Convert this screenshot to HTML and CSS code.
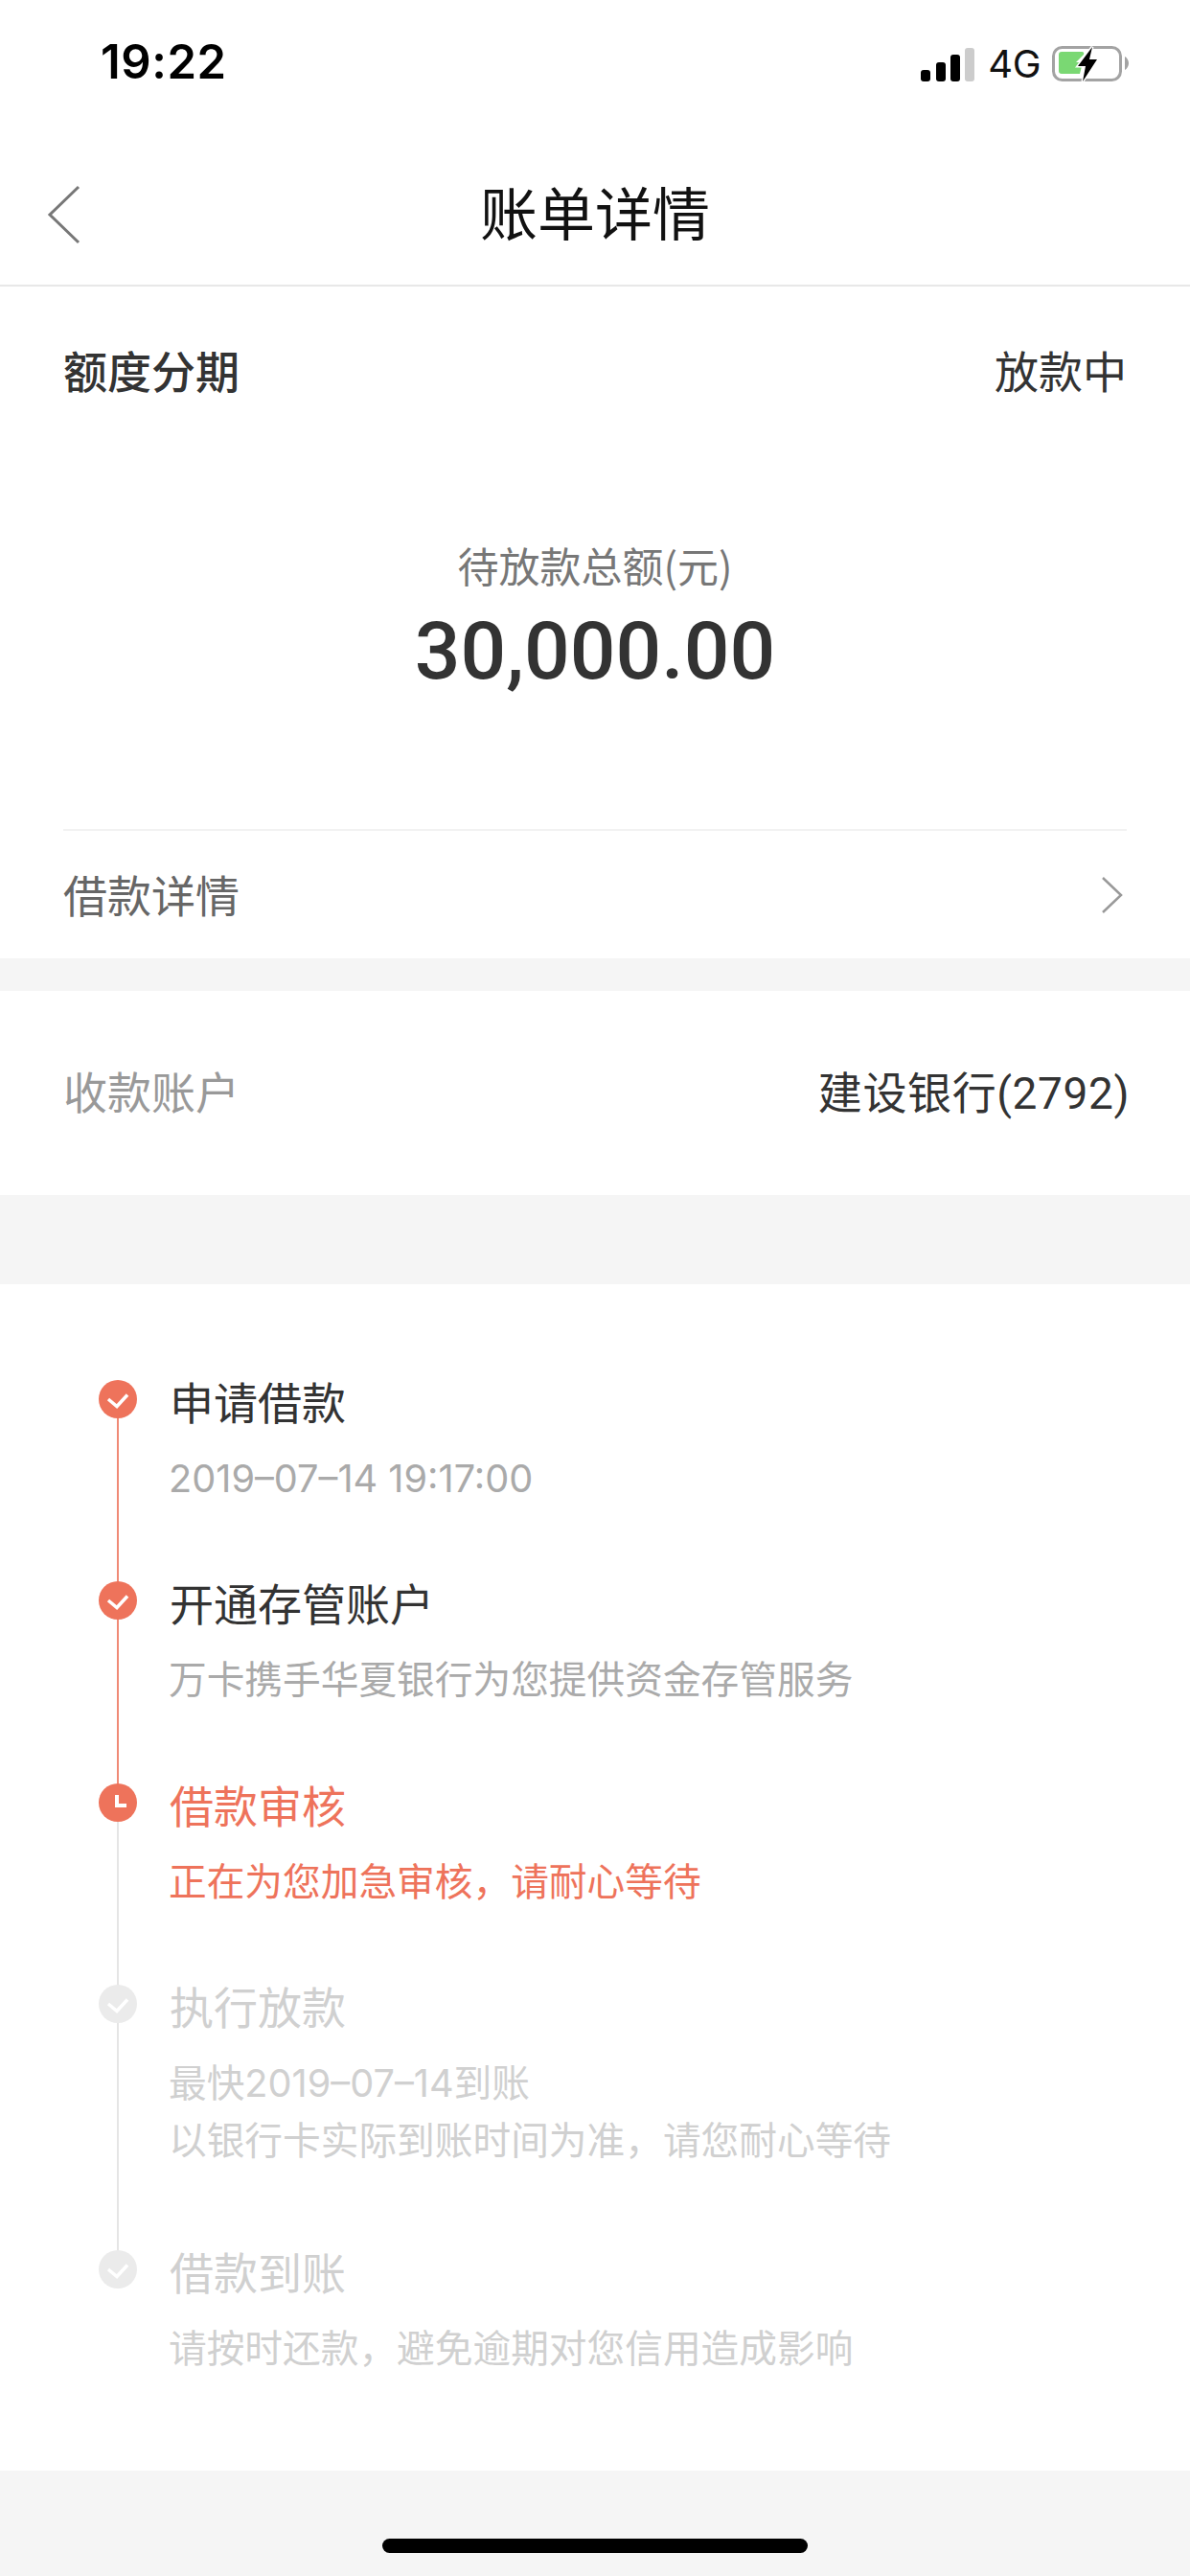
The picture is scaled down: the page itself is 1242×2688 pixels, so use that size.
FILE: index.html
```html
<!DOCTYPE html>
<html lang="zh-CN">
<head>
<meta charset="utf-8">
<title>账单详情</title>
<link rel="stylesheet" href="styles.css">
</head>
<body>
<div class="phone">
  <header class="status">
    <span class="clock">19:22</span>
    <div class="status-right">
      <svg class="signal" width="56" height="35" viewBox="0 0 56 35">
        <rect x="0" y="23" width="10" height="12" rx="3" fill="#000"/>
        <rect x="16" y="15" width="10" height="20" rx="3" fill="#000"/>
        <rect x="31" y="7" width="10" height="28" rx="3" fill="#000"/>
        <rect x="46" y="0" width="10" height="35" rx="3" fill="#ccc"/>
      </svg>
      <span class="net">4G</span>
      <svg class="battery" width="80" height="38" viewBox="0 0 80 38">
        <rect x="1.5" y="1.5" width="70" height="34" rx="9" fill="none" stroke="#a3a3a3" stroke-width="3"/>
        <path d="M76 11c2 1 4 4 4 7s-2 6-4 7z" fill="#a3a3a3"/>
        <path d="M10 6h21q3 0 2 3l-8 8h7l-3 12H10q-3 0-3-3V9q0-3 3-3z" fill="#7ad873"/>
        <path d="M42 1 27 21h8l-3 16 15-23h-8l3-13z" fill="#000" stroke="#fff" stroke-width="3" paint-order="stroke"/>
      </svg>
    </div>
  </header>

  <nav class="nav">
    <svg class="back" width="36" height="62" viewBox="0 0 36 62"><path d="M33 2 3 31l30 29" fill="none" stroke="#777" stroke-width="3"/></svg>
    <h1 class="nav-title">账单详情</h1>
  </nav>

  <section class="card card-bill">
    <div class="bill-head">
      <span class="bill-type">额度分期</span>
      <span class="bill-state">放款中</span>
    </div>
    <div class="hero">
      <div class="hero-label">待放款总额(元)</div>
      <div class="hero-amount">30,000.00</div>
    </div>
    <div class="detail-row">
      <span class="detail-label">借款详情</span>
      <svg class="chevron" width="24" height="38" viewBox="0 0 24 38"><path d="M2 1l19 18L2 37" fill="none" stroke="#999" stroke-width="2.5"/></svg>
    </div>
  </section>

  <section class="card card-account">
    <span class="account-label">收款账户</span>
    <span class="account-value">建设银行(2792)</span>
  </section>

  <section class="card card-steps">
    <ol class="steps">
      <li class="step done">
        <svg class="dot" width="40" height="40" viewBox="0 0 40 40"><circle cx="20" cy="20" r="20" fill="#ee735b"/><path d="M10 20l9 7.5L30 15.5" fill="none" stroke="#fff" stroke-width="3.5"/></svg>
        <div class="step-title">申请借款</div>
        <div class="step-desc">2019–07–14 19:17:00</div>
      </li>
      <li class="step done">
        <svg class="dot" width="40" height="40" viewBox="0 0 40 40"><circle cx="20" cy="20" r="20" fill="#ee735b"/><path d="M10 20l9 7.5L30 15.5" fill="none" stroke="#fff" stroke-width="3.5"/></svg>
        <div class="step-title">开通存管账户</div>
        <div class="step-desc">万卡携手华夏银行为您提供资金存管服务</div>
      </li>
      <li class="step current">
        <svg class="dot" width="40" height="40" viewBox="0 0 40 40"><circle cx="20" cy="20" r="20" fill="#ee735b"/><path d="M19 12v11h10" fill="none" stroke="#fff" stroke-width="4"/></svg>
        <div class="step-title">借款审核</div>
        <div class="step-desc">正在为您加急审核，请耐心等待</div>
      </li>
      <li class="step todo tall">
        <svg class="dot" width="40" height="40" viewBox="0 0 40 40"><circle cx="20" cy="20" r="20" fill="#ebebeb"/><path d="M10 20l9 7.5L30 15.5" fill="none" stroke="#fff" stroke-width="3.5"/></svg>
        <div class="step-title">执行放款</div>
        <div class="step-desc">最快2019–07–14到账<br>以银行卡实际到账时间为准，请您耐心等待</div>
      </li>
      <li class="step todo last">
        <svg class="dot" width="40" height="40" viewBox="0 0 40 40"><circle cx="20" cy="20" r="20" fill="#ebebeb"/><path d="M10 20l9 7.5L30 15.5" fill="none" stroke="#fff" stroke-width="3.5"/></svg>
        <div class="step-title">借款到账</div>
        <div class="step-desc">请按时还款，避免逾期对您信用造成影响</div>
      </li>
    </ol>
  </section>

  <div class="home-bar"></div>
</div>
</body>
</html>
```
FILE: styles.css
```css
* { box-sizing: border-box; }
html, body { margin: 0; padding: 0; }
body {
  font-family: Inter, "Noto Sans CJK SC", "Noto Sans", sans-serif;
  background: #f5f5f5;
  color: #333;
}
.phone { position: relative; width: 1242px; height: 2688px; overflow: hidden; background: #f5f5f5; }

.status {
  height: 132px;
  background: #fff;
  display: flex;
  justify-content: space-between;
  align-items: flex-start;
  padding: 34px 64px 0 105px;
}
.clock { font-size: 49px; line-height: 62px; font-weight: 600; color: #000; letter-spacing: 0.6px; }
.status-right { display: flex; align-items: center; margin-top: 14px; }
.signal { display: block; }
.net { font-size: 40px; line-height: 38px; color: #111; margin-left: 14px; margin-right: 12px; letter-spacing: -0.5px; }
.battery { display: block; }

.nav {
  position: relative;
  height: 167px;
  background: #fff;
  border-bottom: 2px solid #e8e8e8;
  display: flex;
  justify-content: center;
  align-items: flex-start;
}
.back { position: absolute; left: 49px; top: 61px; }
.nav-title { margin: 0; font-size: 60px; line-height: 86px; font-weight: 400; color: #111; padding-top: 45px; font-family: "Noto Sans CJK SC", sans-serif; }

.card { background: #fff; }
.card-bill { height: 701px; padding: 0 66px; }
.bill-head {
  display: flex;
  justify-content: space-between;
  align-items: center;
  height: 178px;
  padding-bottom: 6px;
  font-size: 46px;
  font-family: "Noto Sans CJK SC", sans-serif;
}
.bill-type { font-weight: 500; color: #333; }
.bill-state { font-weight: 400; color: #333; }
.hero { height: 390px; padding-top: 82px; text-align: center; border-bottom: 2px solid #f2f2f2; }
.hero-label { font-size: 43px; line-height: 60px; color: #777; font-family: "Noto Sans CJK SC", sans-serif; }
.hero-amount { margin-top: 13px; font-size: 84px; line-height: 96px; font-weight: 500; color: #333; font-family: Roboto, sans-serif; }
.detail-row {
  display: flex;
  justify-content: space-between;
  align-items: center;
  height: 133px;
}
.detail-label { font-size: 46px; line-height: 62px; margin-top: -3px; color: #666; font-family: "Noto Sans CJK SC", sans-serif; }
.chevron { margin-right: 3px; }

.card-account {
  margin-top: 34px;
  height: 213px;
  padding: 0 63px 7px 66px;
  display: flex;
  justify-content: space-between;
  align-items: center;
}
.account-label { font-size: 46px; color: #999; font-family: "Noto Sans CJK SC", sans-serif; }
.account-value { font-size: 46px; color: #333; letter-spacing: 0.6px; font-family: Roboto, "Noto Sans CJK SC", sans-serif; }

.card-steps { margin-top: 93px; height: 1238px; padding: 100px 66px 0 0; }
.steps { list-style: none; margin: 0; padding: 0; }
.step { position: relative; padding-left: 177px; }
.step::after {
  content: "";
  position: absolute;
  left: 122px;
  top: 20px;
  bottom: -20px;
  width: 2px;
  background: #e5e5e5;
}
.step.done::after { background: #f08a76; }
.step.last::after { display: none; }
.dot { position: absolute; left: 103px; top: 0; z-index: 1; }
.step-title { font-size: 46px; line-height: 42px; color: #333; font-family: "Noto Sans CJK SC", sans-serif; }
.step-desc { font-size: 39.7px; line-height: 60px; margin: 31px 0 0 -1px; color: #aaa; padding-bottom: 77.33px; font-family: Inter, "Noto Sans CJK SC", sans-serif; }
.step.tall .step-desc { padding-bottom: 84px; }
.step.current .step-title, .step.current .step-desc { color: #ee735b; }
.step.todo .step-title, .step.todo .step-desc { color: #d0d0d0; }

.home-bar {
  position: absolute;
  left: 399px;
  bottom: 24px;
  width: 444px;
  height: 15px;
  border-radius: 8px;
  background: #000;
}
```
